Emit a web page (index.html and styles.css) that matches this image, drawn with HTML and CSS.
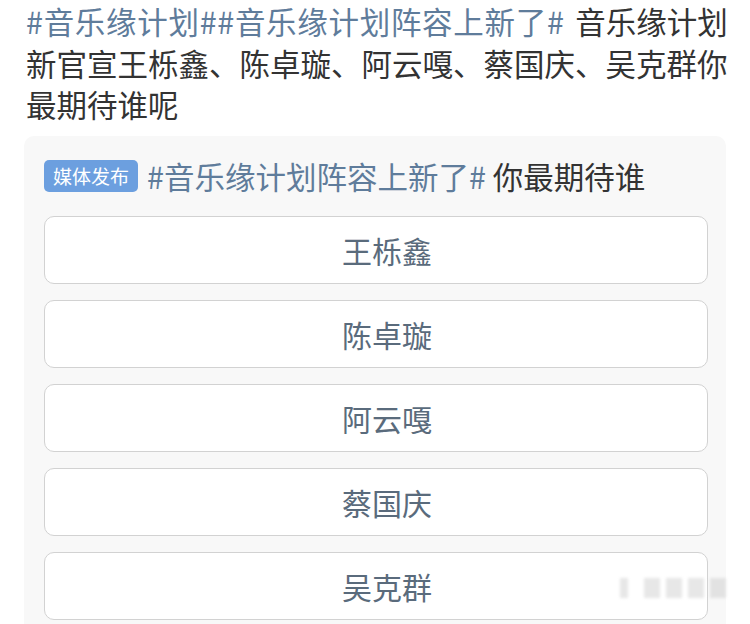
FILE: index.html
```html
<!DOCTYPE html>
<html lang="zh-CN">
  <head>
    <meta charset="UTF-8" />
    <meta name="viewport" content="width=device-width, initial-scale=1.0" />
    <title>音乐缘计划</title>
    <link rel="stylesheet" href="styles.css">
  </head>
  <body>
    <div class="post">
      <p class="post-text">
        <span class="tag">#音乐缘计划#</span><span class="tag">#音乐缘计划阵容上新了#</span>
        音乐缘计划新官宣王栎鑫、陈卓璇、阿云嘎、蔡国庆、吴克群你最期待谁呢
      </p>

      <div class="vote-card">
        <div class="vote-title">
          <span class="badge">媒体发布</span>
          <span><span class="tag">#音乐缘计划阵容上新了#</span> 你最期待谁</span>
        </div>

        <div class="vote-options">
          <div class="vote-option">王栎鑫</div>
          <div class="vote-option">陈卓璇</div>
          <div class="vote-option">阿云嘎</div>
          <div class="vote-option">蔡国庆</div>
          <div class="vote-option">吴克群</div>
        </div>
      </div>
    </div>

    <div class="watermark">
      <span></span><span></span><span></span><span></span><span></span>
    </div>
  </body>
</html>
```

FILE: styles.css
```css
:root {
  --text: #333;
  --link: #5f7c9b;
  --option-text: #5a6b7c;
  --card-bg: #f8f8f8;
  --border: #d2d2d2;
  --badge: #6c9fdf;
}

html,
body {
  overflow: hidden;
}

body {
  margin: 0;
  background: #fff;
  color: var(--text);
  font-family: "Noto Sans CJK SC", "Noto Sans", sans-serif;
}

.post {
  padding: 1px 21px 0 26px;
}

.post-text {
  margin: 0;
  font-size: 30.5px;
  line-height: 41.5px;
  word-spacing: 4px;
}

.post-text .tag {
  letter-spacing: 0.7px;
}

.tag {
  color: var(--link);
}

.vote-card {
  margin: 10px 3px 0 -2px;
  padding: 20px 18px 20px 20px;
  background: var(--card-bg);
  border-radius: 10px;
}

.vote-title {
  display: flex;
  align-items: center;
  gap: 9px;
  height: 40px;
  font-size: 30.5px;
  margin-bottom: 20px;
}

.badge {
  display: flex;
  align-items: center;
  justify-content: center;
  width: 94px;
  height: 32px;
  background: var(--badge);
  color: #fff;
  border-radius: 5px;
  font-size: 19px;
}

.vote-options {
  display: flex;
  flex-direction: column;
  gap: 16px;
}

.vote-option {
  height: 66px;
  display: flex;
  align-items: center;
  justify-content: center;
  padding-left: 22px;
  background: #fff;
  border: 1px solid var(--border);
  border-radius: 10px;
  color: var(--option-text);
  font-size: 30px;
}

.watermark {
  position: absolute;
  left: 620px;
  top: 578px;
  display: flex;
  gap: 6px;
  opacity: 0.35;
  filter: blur(1.5px);
}

.watermark span {
  width: 16px;
  height: 20px;
  background: #bbb;
}

.watermark span:first-child {
  width: 8px;
  margin-right: 10px;
}
```
